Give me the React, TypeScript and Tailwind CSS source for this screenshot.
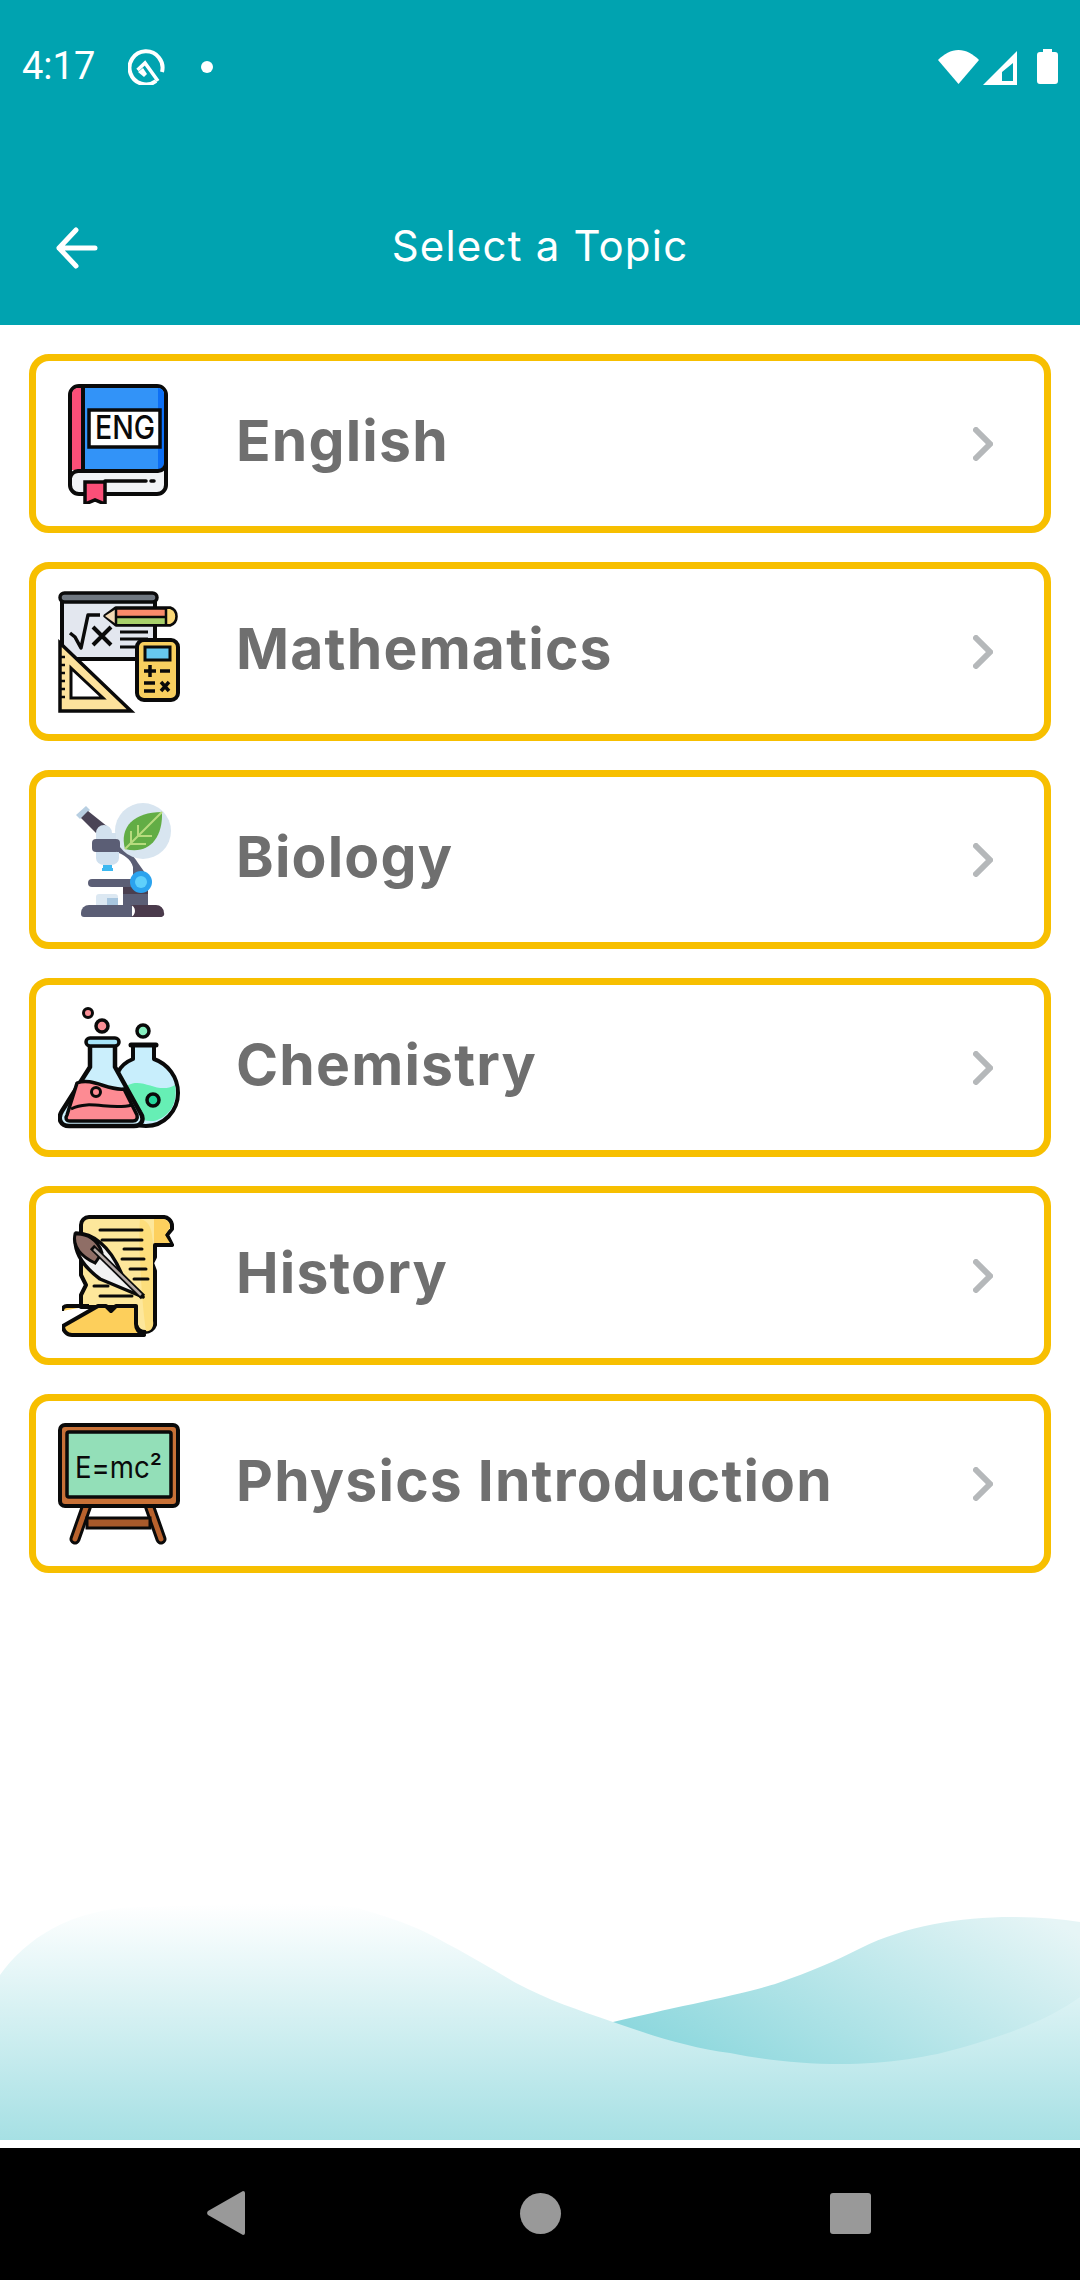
const sans = "font-['Inter','Liberation_Sans',sans-serif]";

const Ink = "#0a0a0a";

function EnglishIcon() {
  return (
    <svg viewBox="0 0 100 120" className="w-[100px] h-[120px]">
      <rect x="2" y="2" width="96" height="108" rx="9" fill="#f1f3f6" stroke={Ink} strokeWidth="4" />
      <path d="M4 86 V10 a6 6 0 0 1 6-6 h6 V86 Z" fill="#fb4f78" />
      <path d="M16 4 H90 a6 6 0 0 1 6 6 V78 a8 8 0 0 1-8 8 H16 Z" fill="#3293f8" />
      <path d="M90 4 a6 6 0 0 1 6 6 V78 a8 8 0 0 1-6 8 Z" fill="#0d6ff5" />
      <path d="M2 94 a9 9 0 0 1 8-7 H90 a8 8 0 0 0 8-8 M15 4 V87" fill="none" stroke={Ink} strokeWidth="4" />
      <path d="M37 97 H78 M83 97 h3" stroke={Ink} strokeWidth="3.5" strokeLinecap="round" />
      <path d="M17 98 H37 V120 L27 116 L17 120 Z" fill="#fb4f78" stroke={Ink} strokeWidth="3.5" />
      <rect x="21" y="26" width="71" height="37" fill="#fff" stroke={Ink} strokeWidth="3.5" />
      <text x="27" y="55" fontFamily="'Inter',sans-serif" fontWeight="500" fontSize="33" textLength="60" lengthAdjust="spacingAndGlyphs" fill={Ink}>ENG</text>
    </svg>
  );
}

function MathIcon() {
  return (
    <svg viewBox="0 0 122 122" className="w-[122px] h-[122px]">
      <rect x="4" y="10" width="93" height="58" fill="#e3e7ef" stroke={Ink} strokeWidth="4" />
      <rect x="2" y="2" width="97" height="9" rx="4.5" fill="#6f7780" stroke={Ink} strokeWidth="3.5" />
      <path d="M12 42 l5 4 l6 11 l7-33 h12" fill="none" stroke={Ink} strokeWidth="3.5" strokeLinejoin="round" />
      <path d="M35 36 L53 54 M53 36 L35 54" stroke={Ink} strokeWidth="4" />
      <path d="M62 41 H90 M62 48 H90 M62 56 H80" stroke={Ink} strokeWidth="3" />
      <path d="M47 25 L58 17 H112 a9 9 0 0 1 0 17 H58 Z" fill="#f98b6b" stroke={Ink} strokeWidth="3.5" strokeLinejoin="round" />
      <path d="M59 26 H108 V33 H59 Z" fill="#a8d06b" />
      <path d="M108 18 h4 a8 8 0 0 1 0 15 h-4 Z" fill="#fad877" />
      <path d="M47 25 L58 18 V33 Z" fill="#f3d9b4" />
      <path d="M58 17 V34 M108 17 V34 M58 26 H108" stroke={Ink} strokeWidth="2.5" />
      <rect x="79" y="49" width="41" height="60" rx="7" fill="#f8cf5f" stroke={Ink} strokeWidth="4" />
      <rect x="87" y="56" width="25" height="13" fill="#67c8ef" stroke={Ink} strokeWidth="3" />
      <path d="M86 80 H98 M92 74 V86 M102 80 H112 M86 92 H97 M86 100 H97 M103 91 L111 100 M111 91 L103 100" stroke={Ink} strokeWidth="3.5" />
      <path d="M2 52 L73 120 H2 Z" fill="#fde29c" stroke={Ink} strokeWidth="3.5" strokeLinejoin="miter" />
      <path d="M13 77 L45 107 H13 Z" fill="#fff" stroke={Ink} strokeWidth="3" />
      <path d="M2 66 h5 M2 74 h5 M2 82 h5 M2 90 h5 M2 98 h5 M2 106 h5" stroke={Ink} strokeWidth="2.5" />
    </svg>
  );
}

function BiologyIcon() {
  return (
    <svg viewBox="0 0 96 114" className="w-[96px] h-[114px]">
      <path d="M41 41 C50 46 57 52 62 60 L72 74 V102 H47 V82 L57 82 V64 C55 56 48 52 41 49 Z" fill="#5b5e75" />
      <circle cx="67" cy="28" r="28" fill="#d8e5f0" />
      <path d="M49 46 C43 24 58 9 86 9 C87 36 72 52 49 46 Z" fill="#62ad45" />
      <path d="M49 46 L86 9 M62 33 V22 M62 33 H76 M54 41 H70 M55 40 V28" stroke="#b7db7d" strokeWidth="2" fill="none" />
      <path d="M0 12 L10 3 L14 7 L4 16 Z" fill="#b8cfe2" />
      <path d="M5 15 L12 8 L32 24 L24 34 Z" fill="#4a4456" />
      <path d="M20 36 V30 a8 8 0 0 1 16 0 H40 V38 H20 Z" fill="#d2e1ee" />
      <rect x="16" y="36" width="28" height="13" rx="4" fill="#5b5e75" />
      <path d="M20 49 H43 V55 a8 7 0 0 1-8 7 H28 a8 7 0 0 1-8-7 Z" fill="#cfe0ef" />
      <path d="M27 62 H36 V65 H37 V68 H26 V65 H27 Z" fill="#3cb8f0" />
      <rect x="12" y="76" width="48" height="8" rx="4" fill="#5b5e75" />
      <rect x="47" y="84" width="25" height="7" fill="#4a3f50" />
      <circle cx="65" cy="79" r="11" fill="#2ba3ee" />
      <circle cx="65" cy="79" r="6" fill="#5fd0fb" />
      <path d="M20 94 a3 3 0 0 1 3-3 H39 a3 3 0 0 1 3 3 V102 H20 Z" fill="#dce8f2" />
      <rect x="31" y="95" width="11" height="7" fill="#a8c6df" />
      <path d="M5 110 a8 8 0 0 1 8-8 H56 V114 H8 a3 3 0 0 1-3-3 Z" fill="#5b5e75" />
      <path d="M54 102 H80 a8 8 0 0 1 8 8 a3 3 0 0 1-3 4 H54 a5 6 0 0 0 0-12 Z" fill="#4a3a4b" />
    </svg>
  );
}

function ChemistryIcon() {
  return (
    <svg viewBox="0 0 122 122" className="w-[122px] h-[122px]">
      <circle cx="30" cy="6" r="4.5" fill="#fb8f96" stroke={Ink} strokeWidth="3" />
      <circle cx="44" cy="19" r="6" fill="#fb8f96" stroke={Ink} strokeWidth="3.5" />
      <circle cx="85" cy="24" r="6" fill="#86efc0" stroke={Ink} strokeWidth="3.5" />
      <path d="M75 38 V52 C60 58 56 70 56 86 C56 106 70 119 88 119 C106 119 120 104 120 86 C120 70 110 57 96 52 V38 Z" fill="#c8eefc" stroke={Ink} strokeWidth="4" strokeLinejoin="round" />
      <path d="M73 38 H98" stroke={Ink} strokeWidth="5" strokeLinecap="round" />
      <path d="M70 78 C86 70 100 88 117 78 C120 96 112 110 96 114 C72 116 64 92 70 78 Z" fill="#66efb5" />
      <circle cx="95" cy="93" r="6" fill="#25d79b" stroke={Ink} strokeWidth="3.5" />
      <path d="M32 38 V60 L4 104 C-1 112 3 119 11 119 H76 C84 119 87 112 82 105 L57 60 V38 Z" fill="#cbeffc" stroke={Ink} strokeWidth="4.5" strokeLinejoin="round" />
      <rect x="28" y="31" width="33" height="8" rx="4" fill="#a6e3f7" stroke={Ink} strokeWidth="3.5" />
      <path d="M19 76 C34 70 50 84 66 82 L79 108 C80 112 78 114 75 114 H12 C8 114 7 111 9 108 Z" fill="#fd8b93" stroke={Ink} strokeWidth="3.5" strokeLinejoin="round" />
      <path d="M13 102 C32 92 52 104 74 98" fill="none" stroke={Ink} strokeWidth="3" />
      <circle cx="38" cy="85" r="4.5" fill="#fd8b93" stroke={Ink} strokeWidth="3" />
    </svg>
  );
}

function HistoryIcon() {
  return (
    <svg viewBox="0 0 114 122" className="w-[114px] h-[122px]">
      <path d="M27 2 H100 a9 9 0 0 1 10 9 V14 L105 20 L110 30 H93 V42 L90 48 L93 56 V110 a10 10 0 0 1-19 0 V92 H19 V80 L24 70 L19 60 V10 a8 8 0 0 1 8-8 Z" fill="#fde79b" stroke={Ink} strokeWidth="4" strokeLinejoin="round" />
      <path d="M78 4 C88 6 90 14 91 30 V106 a6 8 0 0 1-7 10 C80 90 76 30 78 4 Z" fill="#fdde7c" />
      <path d="M92 4 h8 a8 8 0 0 1 8 8 l-5 8 5 8 H92 Z" fill="#fdd05e" />
      <path d="M0 96 a5 5 0 0 1 5-5 H27 M36 91 H44 L49 96 L54 91 H74 V108 a12 12 0 0 0 8 12 H10 a9 9 0 0 1-9-9 Z" fill="#fdcf5b" stroke={Ink} strokeWidth="4" strokeLinejoin="round" />
      <path d="M38 15 H80 M40 25 H80 M62 34 H80 M60 44 H82 M68 54 H84 M72 64 H86 M32 71 H46 M38 81 H70" stroke={Ink} strokeWidth="3" strokeLinecap="round" />
      <path d="M14 18 C30 18 48 30 60 60 L81 82 L38 64 C22 52 10 36 14 18 Z" fill="#f2f2f2" stroke={Ink} strokeWidth="3.5" strokeLinejoin="round" />
      <path d="M13 19 C24 18 36 24 40 38 L33 48 C20 42 10 32 13 19 Z" fill="#8f6e66" stroke={Ink} strokeWidth="3" />
      <path d="M30 32 L81 82" stroke={Ink} strokeWidth="6" />
      <path d="M32 34 L79 80" stroke="#b5aaa6" strokeWidth="2.5" />
    </svg>
  );
}

function PhysicsIcon() {
  return (
    <svg viewBox="0 0 122 122" className="w-[122px] h-[122px]">
      <path d="M29 82 L17 116 M91 82 L103 116" stroke={Ink} strokeWidth="11" strokeLinecap="round" />
      <path d="M29 82 L17 116 M91 82 L103 116" stroke="#b8622d" strokeWidth="5" strokeLinecap="round" />
      <rect x="29" y="95" width="63" height="10" fill="#a85a2b" stroke={Ink} strokeWidth="3" />
      <rect x="2" y="2" width="118" height="81" rx="5" fill="#c87137" stroke={Ink} strokeWidth="4" />
      <rect x="9" y="9" width="104" height="65" rx="2" fill="#93dfb8" stroke={Ink} strokeWidth="3.5" />
      <text x="17" y="55" fontFamily="'Inter',sans-serif" fontSize="30" textLength="87" lengthAdjust="spacingAndGlyphs" fill={Ink}>E=mc²</text>
    </svg>
  );
}

const topics = [
  { name: "English", icon: <EnglishIcon />, pad: "pl-[32px]", gap: "w-[68px]" },
  { name: "Mathematics", icon: <MathIcon />, pad: "pl-[22px]", gap: "w-[56px]" },
  { name: "Biology", icon: <BiologyIcon />, pad: "pl-[40px]", gap: "w-[64px]" },
  { name: "Chemistry", icon: <ChemistryIcon />, pad: "pl-[22px]", gap: "w-[56px]" },
  { name: "History", icon: <HistoryIcon />, pad: "pl-[26px]", gap: "w-[60px]" },
  { name: "Physics Introduction", icon: <PhysicsIcon />, pad: "pl-[22px]", gap: "w-[56px]" },
];

function TopicRow({ name, icon, pad, gap }: { name: string; icon: React.ReactNode; pad: string; gap: string }) {
  return (
    <div className={`h-[179px] border-[7px] border-[#f7bf00] rounded-[20px] bg-white flex items-center pr-[51px] ${pad}`}>
      <div className="shrink-0 flex items-center">{icon}</div>
      <div className={`shrink-0 ${gap}`} />
      <span className={`flex-1 pb-[6px] text-[57px] leading-none font-bold tracking-[1.2px] text-[#6f6f6f] ${sans}`}>{name}</span>
      <svg viewBox="0 0 20 34" className="w-[20px] h-[34px]">
        <path d="M3 3 L17 17 L3 31" fill="none" stroke="#b5b8ba" strokeWidth="6" strokeLinecap="round" strokeLinejoin="miter" />
      </svg>
    </div>
  );
}

export default function App() {
  return (
    <div className="w-[1080px] h-[2280px] bg-white flex flex-col overflow-hidden">
      {/* status bar + toolbar */}
      <div className="h-[325px] bg-[#00a3b0] shrink-0 flex flex-col text-white">
        <div className="h-[134px] flex justify-between pl-[22px] pr-[22px] pt-[48px]">
          <div className="flex items-start h-[40px]">
            <span className="w-[106px] text-[38px] leading-[37px] font-['Roboto',sans-serif]">4:17</span>
            <svg viewBox="0 0 37 37" className="w-[37px] h-[37px]">
              <path d="M28 33 A16.5 16.5 0 1 1 34 24" fill="none" stroke="#fff" strokeWidth="4" />
              <path d="M9.5 22 L17 15 L30 33" fill="none" stroke="#fff" strokeWidth="3.5" />
              <path d="M10 24 L16 29 L19 26 L15 20 Z" fill="#fff" />
            </svg>
            <span className="w-[12px] h-[12px] mt-[13px] ml-[36px] rounded-full bg-white" />
          </div>
          <div className="flex items-start h-[40px] pt-[2px]">
            <svg viewBox="0 0 41 34" className="w-[41px] h-[34px]">
              <path d="M20.5 34 L0 10 C6 4 13 0 20.5 0 C28 0 35 4 41 10 Z" fill="#fff" />
            </svg>
            <svg viewBox="0 0 34 34" className="w-[34px] h-[34px] ml-[4px] mt-[1px]">
              <path d="M34 0 V34 H0 Z M30 12 L19 21 V30 H30 Z" fill="#fff" fillRule="evenodd" />
            </svg>
            <svg viewBox="0 0 21 35" className="w-[21px] h-[35px] ml-[20px] -mt-[1px]">
              <path d="M6 0 H15 V3 H18 a3 3 0 0 1 3 3 V32 a3 3 0 0 1-3 3 H3 a3 3 0 0 1-3-3 V6 a3 3 0 0 1 3-3 H6 Z" fill="#fff" />
            </svg>
          </div>
        </div>
        <div className="relative h-[80px] mt-[73px] flex items-center justify-center">
          <svg viewBox="0 0 42 42" className="absolute left-[56px] top-[20px] w-[42px] h-[42px]">
            <path d="M39 21 H3 M20 3 L3 21 L20 39" fill="none" stroke="#fff" strokeWidth="5" strokeLinecap="round" strokeLinejoin="round" />
          </svg>
          <span className={`text-[42px] leading-none tracking-[1.2px] font-normal pb-[2px] ${sans}`}>Select a Topic</span>
        </div>
      </div>

      {/* topics */}
      <div className="flex-1 relative">
        <div className="relative z-10 flex flex-col gap-[29px] pt-[29px] pl-[29px] pr-[29px]">
          {topics.map((t) => (
            <TopicRow key={t.name} {...t} />
          ))}
        </div>
        {/* background wave */}
        <svg viewBox="0 0 1080 240" className="absolute left-0 bottom-[8px] w-[1080px] h-[240px]">
          <defs>
            <linearGradient id="front" x1="0" y1="0" x2="0" y2="1">
              <stop offset="0" stopColor="#ffffff" />
              <stop offset="1" stopColor="#a6e0e4" />
            </linearGradient>
            <linearGradient id="back" x1="0.05" y1="0.8" x2="1" y2="0.1">
              <stop offset="0" stopColor="#85d5db" />
              <stop offset="1" stopColor="#e6f5f6" />
            </linearGradient>
          </defs>
          <path d="M613 122 C670 108 745 94 778 83 C810 72 835 61 861 48 C905 26 960 17 1012 17 C1040 17 1060 19 1080 22 V200 H613 Z" fill="url(#back)" />
          <path d="M0 75 C25 40 70 8 140 7 C200 5 300 0 358 8 C380 15 405 22 427 33 C456 48 488 66 516 83 C548 100 578 110 613 122 C650 135 690 148 730 153 C765 160 800 164 840 164 C890 164 930 157 964 147 C1005 135 1045 122 1080 97 V240 H0 Z" fill="url(#front)" />
        </svg>
      </div>

      {/* nav bar */}
      <div className="h-[132px] bg-black shrink-0 flex items-center justify-between pl-[207px] pr-[209px] pb-[2px]">
        <svg viewBox="0 0 38 46" className="w-[38px] h-[46px]">
          <path d="M36 1 a2 2 0 0 1 2 2 V43 a2 2 0 0 1-2 2 L1 25 a3 3 0 0 1 0-4 Z" fill="#999" />
        </svg>
        <div className="w-[41px] h-[41px] ml-[5px] rounded-full bg-[#999]" />
        <div className="w-[41px] h-[41px] rounded-[3px] bg-[#999]" />
      </div>
    </div>
  );
}
